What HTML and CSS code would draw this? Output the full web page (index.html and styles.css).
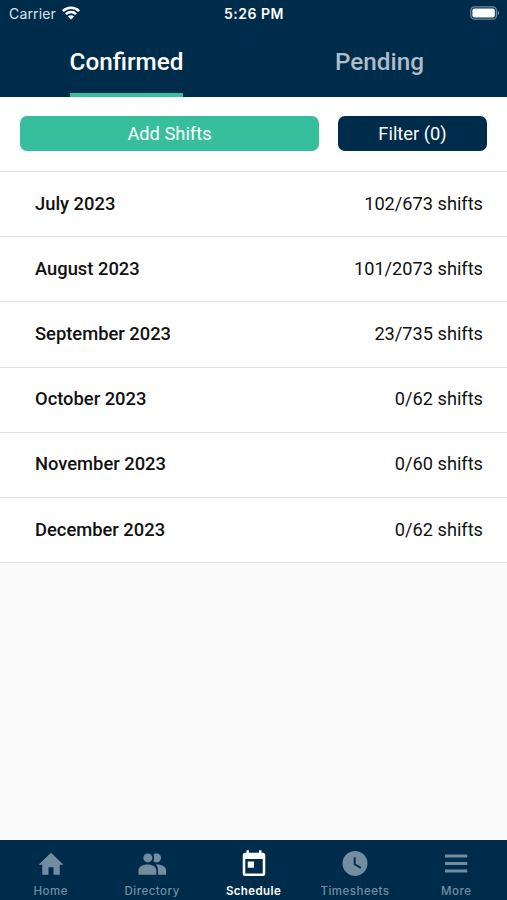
FILE: index.html
```html
<!DOCTYPE html>
<html lang="en">
<head>
<meta charset="utf-8">
<title>Schedule</title>
<link rel="stylesheet" href="styles.css">
</head>
<body>
<div class="app">
  <header class="header">
    <div class="status">
      <div class="carrier"><span>Carrier</span>
        <svg class="wifi" viewBox="0 0 18 14" fill="none" stroke="#fff" stroke-width="2.5"><path d="M.9 5.1a11.5 11.5 0 0 1 16.2 0M3.9 8.2a7.2 7.2 0 0 1 10.2 0"/><path d="M9 13.6 5.9 10.5a4.4 4.4 0 0 1 6.2 0z" fill="#fff" stroke="none"/></svg>
      </div>
      <time class="clock">5:26 PM</time>
      <svg class="battery" viewBox="0 0 30 14"><rect x=".8" y=".8" width="25.6" height="12.4" rx="3.6" fill="none" stroke="#6f889b" stroke-width="1.3"/><rect x="2.4" y="2.4" width="22.4" height="9.2" rx="2" fill="#fff"/><path d="M27.8 4.8v4.4c2-.8 2-3.6 0-4.4z" fill="#6f889b"/></svg>
    </div>
    <nav class="tabs">
      <div class="tab active"><span>Confirmed</span></div>
      <div class="tab"><span>Pending</span></div>
    </nav>
  </header>
  <div class="actions">
    <button class="button add">Add Shifts</button>
    <button class="button filter">Filter (0)</button>
  </div>
  <main class="months">
    <div class="row"><b>July 2023</b><span>102/673 shifts</span></div>
    <div class="row"><b>August 2023</b><span>101/2073 shifts</span></div>
    <div class="row"><b>September 2023</b><span>23/735 shifts</span></div>
    <div class="row"><b>October 2023</b><span>0/62 shifts</span></div>
    <div class="row"><b>November 2023</b><span>0/60 shifts</span></div>
    <div class="row"><b>December 2023</b><span>0/62 shifts</span></div>
  </main>
  <nav class="bottom">
    <div class="item"><svg viewBox="0 0 24 24"><path d="M10 20.500v-6h4v6h5v-8h3L12 3 2 12.500h3v8z"/></svg><span>Home</span></div>
    <div class="item"><svg viewBox="0 0 24 24"><circle cx="8.700" cy="7.100" r="3.600"/><path d="M13.200 4.500a3.600 3.600 0 1 1 0 5.200c.6-1.600.6-3.600 0-5.200zM1.200 20.500v-3.300c0-3.200 3.200-4.900 7.200-4.900s7.100 1.700 7.100 4.900v3.300zM15 12.400c4.600-.5 8.300 1.400 8.300 4.800v3.300h-6.500v-3.300c0-2-.5-3.600-1.800-4.800z"/></svg><span>Directory</span></div>
    <div class="item selected"><svg viewBox="0 0 24 24"><path d="M7 10h5v5H7zM19 19.500H5V8h14zm0-16.500h-1V1h-2v2H8V1H6v2H5a2 2 0 0 0-2 2v14.500a2 2 0 0 0 2 2h14a2 2 0 0 0 2-2V5a2 2 0 0 0-2-2z"/></svg><span>Schedule</span></div>
    <div class="item"><svg viewBox="0 0 24 24"><path d="M12 1.500a10 10 0 1 0 0 20 10 10 0 0 0 0-20zm4.200 14.200L11 12.500v-6h1.500v5.200l4.500 2.700z"/></svg><span>Timesheets</span></div>
    <div class="item"><svg viewBox="0 0 24 24"><path d="M3.200 4.300h17.800v2.400H3.200zm0 6h17.800v2.400H3.200zm0 6h17.800v2.400H3.200z"/></svg><span>More</span></div>
  </nav>
</div>
</body>
</html>
```
FILE: styles.css
```css
* { box-sizing: border-box; }
body { margin: 0; font-family: Roboto, sans-serif; background: #fafafa; color: #111; }
.app { height: 900px; display: flex; flex-direction: column; overflow: hidden; }
.header { height: 97px; background: #002c4b; color: #fff; display: flex; flex-direction: column; }
.status { height: 27px; display: grid; grid-template-columns: 1fr auto 1fr; align-items: center; padding: 0 7px 0 9px; font-family: Inter, sans-serif; }
.carrier { display: flex; align-items: center; gap: 6px; font-size: 14px; letter-spacing: .15px; color: #dbe3e9; }
.wifi { width: 18px; height: 14px; margin-top: -1px; }
.clock { font-size: 14px; font-weight: 600; letter-spacing: .5px; margin-right: 1px; }
.battery { width: 30px; height: 14px; justify-self: end; margin-top: -1px; }
.tabs { flex: 1; display: flex; padding-right: 1px; }
.tab { flex: 1; display: flex; justify-content: center; font-size: 24.300px; font-weight: 500; color: #adbcc8; }
.tab span { display: block; line-height: 69px; height: 70px; }
.tab.active { color: #fff; }
.tab.active span { border-bottom: 4px solid #37bf9d; }
.actions { height: 74px; padding: 19px 20px 0; display: flex; gap: 19px; align-items: flex-start; background: #fff; }
.button { height: 35px; border: 0; border-radius: 7px; padding: 1px 0 0; color: #fff; font: 400 18.300px/34px Roboto, sans-serif; }
.add { flex: 1; background: #37bf9d; }
.filter { width: 149px; background: #002c4b; }
.months { border-top: 1px solid #e5e5e5; background: #fff; }
.row { height: 65.200px; border-bottom: 1px solid #e2e2e2; padding: 0 24px 2px 35px; display: flex; align-items: center; justify-content: space-between; font-size: 18.200px; }
.row b { font-weight: 500; font-size: 18.350px; }
.bottom { margin-top: auto; height: 60px; background: #002c4b; display: flex; }
.item { flex: 1; display: flex; flex-direction: column; align-items: center; padding-top: 9px; color: #728ca0; font: 500 11.500px/14px Inter, sans-serif; letter-spacing: .5px; }
.item svg { width: 30px; height: 30px; fill: currentColor; }
.item span { margin-top: 5px; }
.selected { color: #fff; font-weight: 600; letter-spacing: .4px; }
```
